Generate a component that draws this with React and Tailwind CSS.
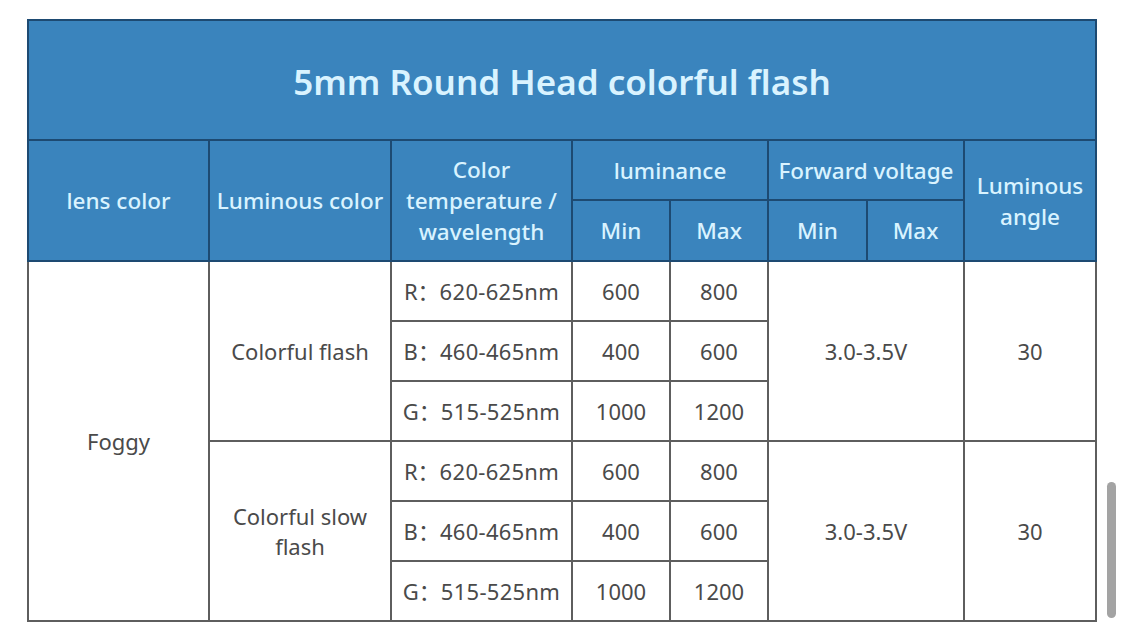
import React from "react";

const H = "border-2 border-[#1d4a72] text-[#d9f3ff] font-medium text-[22.5px] leading-[31px] text-center align-middle";
const B = "border-2 border-[#5e5e5e] text-[#4a4a4a] text-[22px] leading-[30px] text-center align-middle";

function Group({ name }) {
  const rows = [
    ["R", "620-625nm", "600", "800"],
    ["B", "460-465nm", "400", "600"],
    ["G", "515-525nm", "1000", "1200"],
  ];
  return rows.map((r, i) => (
    <tr key={i} className="h-[60px]">
      {i === 0 && name.first && (
        <td rowSpan={6} className={B}>Foggy</td>
      )}
      {i === 0 && (
        <td rowSpan={3} className={B}>{name.label}</td>
      )}
      <td className={B}>{r[0]}：<span className="tracking-[0.3px]">{r[1]}</span></td>
      <td className={B}>{r[2]}</td>
      <td className={B}>{r[3]}</td>
      {i === 0 && (
        <>
          <td rowSpan={3} colSpan={2} className={B}>3.0-3.5V</td>
          <td rowSpan={3} className={B}>30</td>
        </>
      )}
    </tr>
  ));
}

export default function App() {
  return (
    <div
      className="relative w-[1125px] h-[637px] bg-white overflow-hidden"
      style={{ fontFamily: '"Noto Sans", "Noto Sans CJK SC", sans-serif' }}
    >
      <div className="pt-[19px] pl-[27px]">
        <table className="table-fixed border-collapse w-[1068px]">
          <colgroup>
            <col className="w-[181px]" />
            <col className="w-[182px]" />
            <col className="w-[181px]" />
            <col className="w-[98px]" />
            <col className="w-[98px]" />
            <col className="w-[99px]" />
            <col className="w-[97px]" />
            <col className="w-[132px]" />
          </colgroup>
          <thead className="bg-[#3a84bd]">
            <tr className="h-[120px]">
              <th colSpan={8} className="border-2 border-[#1d4a72] text-[#d9f3ff] font-semibold text-[35px] pt-[4px] text-center align-middle">
                5mm Round Head colorful flash
              </th>
            </tr>
            <tr className="h-[60px]">
              <th rowSpan={2} className={H}>lens color</th>
              <th rowSpan={2} className={H}>Luminous color</th>
              <th rowSpan={2} className={H}>
                Color<br />temperature /<br />wavelength
              </th>
              <th colSpan={2} className={H}>luminance</th>
              <th colSpan={2} className={H}>Forward voltage</th>
              <th rowSpan={2} className={H}>Luminous<br />angle</th>
            </tr>
            <tr className="h-[61px]">
              <th className={H}>Min</th>
              <th className={H}>Max</th>
              <th className={H}>Min</th>
              <th className={H}>Max</th>
            </tr>
          </thead>
          <tbody>
            <Group name={{ first: true, label: "Colorful flash" }} />
            <Group name={{ first: false, label: <>Colorful slow<br />flash</> }} />
          </tbody>
        </table>
      </div>
      <div className="absolute left-[1107px] top-[482px] w-[9px] h-[136px] rounded-full bg-[#a3a3a3]" />
    </div>
  );
}
